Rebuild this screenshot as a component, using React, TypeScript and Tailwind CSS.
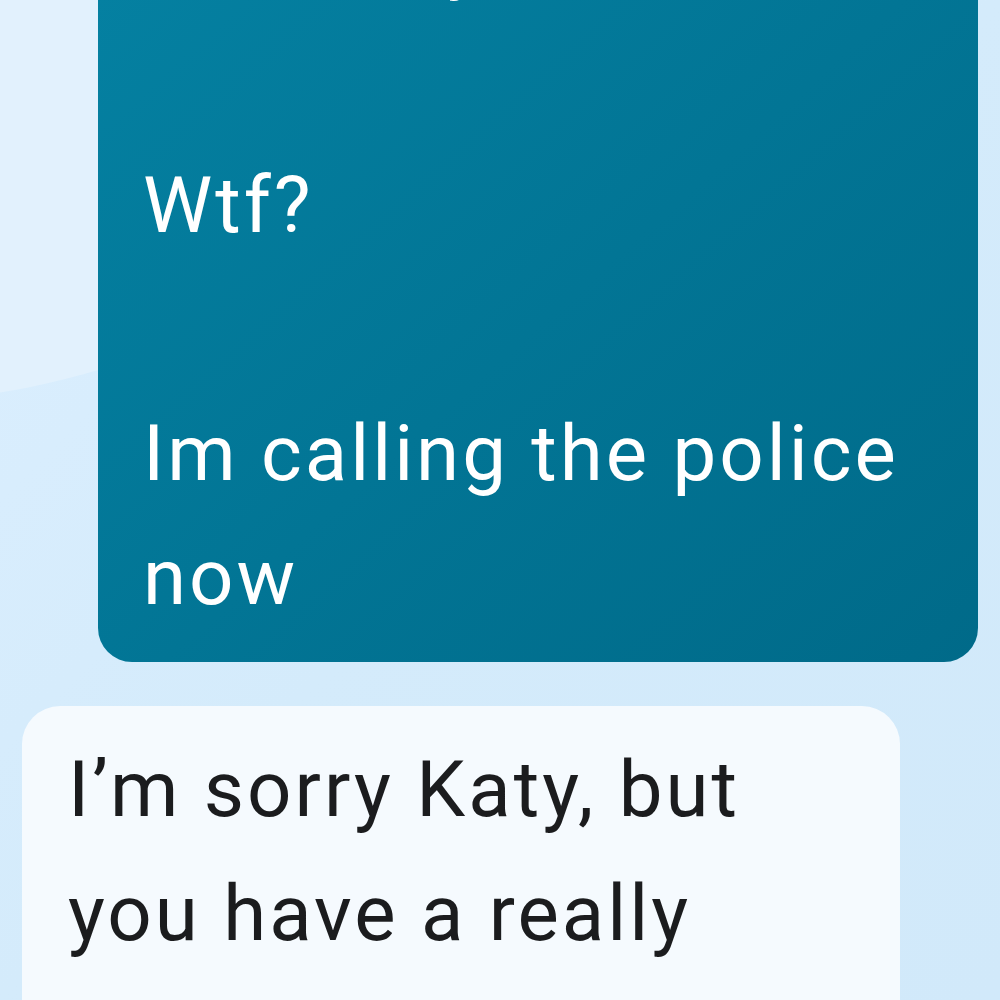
import React from "react";

export default function App() {
  return (
    <div className="relative h-[1000px] w-[1000px] overflow-hidden bg-gradient-to-br from-[#dcefff] via-[#d4ebfb] to-[#d1e9fa]" style={{ fontFamily: "Roboto, 'Noto Sans', sans-serif" }}>
      <div className="absolute left-[-929px] top-[-1197px] h-[1600px] w-[1600px] rounded-full bg-[#e2f1fd]" />
      <div className="relative -mt-[124px] flex flex-col gap-[44px]">
        <div className="ml-[98px] w-[880px] rounded-[34px] bg-gradient-to-br from-[#0582a3] to-[#006a89] px-[45px] pt-[20px] pb-[22px] text-[78px] leading-[124px] tracking-[3px] text-white">
          <div>Seriously</div>
          <div>&nbsp;</div>
          <div>Wtf?</div>
          <div>&nbsp;</div>
          <div>Im calling the police</div>
          <div>now</div>
        </div>
        <div className="ml-[22px] w-[878px] rounded-[38px] bg-[#f5fafe] px-[46px] pt-[22px] pb-[120px] text-[78px] leading-[124px] tracking-[3px] text-[#1b1c1e]">
          <div>I’m sorry Katy, but</div>
          <div>you have a really</div>
        </div>
      </div>
    </div>
  );
}
